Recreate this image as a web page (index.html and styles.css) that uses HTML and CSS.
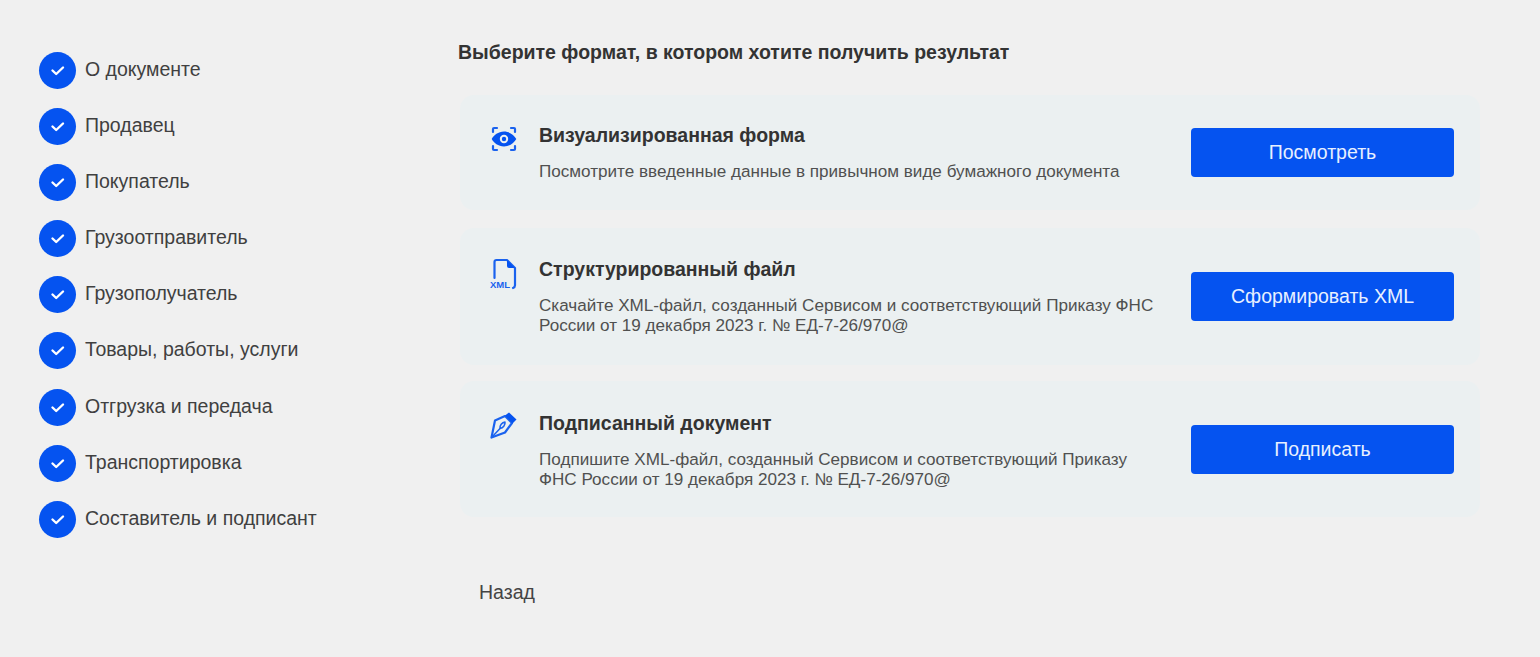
FILE: index.html
```html
<!DOCTYPE html>
<html lang="ru">
<head>
<meta charset="utf-8">
<title>Выбор формата</title>
<link rel="stylesheet" href="styles.css">
</head>
<body>
<div class="page">
  <nav class="steps">
    <div class="step"><span class="dot"><svg viewBox="0 0 37 37"><path d="M13.500 18.500l3.700 3.500 6.800-6.500"/></svg></span><span class="label">О документе</span></div>
    <div class="step"><span class="dot"><svg viewBox="0 0 37 37"><path d="M13.500 18.500l3.700 3.500 6.800-6.500"/></svg></span><span class="label">Продавец</span></div>
    <div class="step"><span class="dot"><svg viewBox="0 0 37 37"><path d="M13.500 18.500l3.700 3.500 6.800-6.500"/></svg></span><span class="label">Покупатель</span></div>
    <div class="step"><span class="dot"><svg viewBox="0 0 37 37"><path d="M13.500 18.500l3.700 3.500 6.800-6.500"/></svg></span><span class="label">Грузоотправитель</span></div>
    <div class="step"><span class="dot"><svg viewBox="0 0 37 37"><path d="M13.500 18.500l3.700 3.500 6.800-6.500"/></svg></span><span class="label">Грузополучатель</span></div>
    <div class="step"><span class="dot"><svg viewBox="0 0 37 37"><path d="M13.500 18.500l3.700 3.500 6.800-6.500"/></svg></span><span class="label">Товары, работы, услуги</span></div>
    <div class="step"><span class="dot"><svg viewBox="0 0 37 37"><path d="M13.500 18.500l3.700 3.500 6.800-6.500"/></svg></span><span class="label">Отгрузка и передача</span></div>
    <div class="step"><span class="dot"><svg viewBox="0 0 37 37"><path d="M13.500 18.500l3.700 3.500 6.800-6.500"/></svg></span><span class="label">Транспортировка</span></div>
    <div class="step"><span class="dot"><svg viewBox="0 0 37 37"><path d="M13.500 18.500l3.700 3.500 6.800-6.500"/></svg></span><span class="label">Составитель и подписант</span></div>
  </nav>
  <main class="content">
    <h1 class="title">Выберите формат, в котором хотите получить результат</h1>
    <section class="card card-view">
      <svg class="icon" viewBox="0 0 28 28">
        <path class="line" d="M3 7V4a1 1 0 0 1 1-1h3M21 3h3a1 1 0 0 1 1 1v3M25 21v3a1 1 0 0 1-1 1h-3M7 25H4a1 1 0 0 1-1-1v-3"/>
        <path class="fill" fill-rule="evenodd" d="M14 6.500c5.800 0 10.200 3.800 12.300 7.500-2.100 3.700-6.500 7.500-12.300 7.500S3.800 17.700 1.700 14C3.800 10.300 8.200 6.500 14 6.500zm0 3.300a4.200 4.200 0 1 0 0 8.400 4.200 4.200 0 0 0 0-8.400z"/>
        <circle class="fill" cx="14" cy="14" r="2.200"/>
      </svg>
      <div class="text">
        <h2>Визуализированная форма</h2>
        <p>Посмотрите введенные данные в привычном виде бумажного документа</p>
      </div>
      <button class="btn">Посмотреть</button>
    </section>
    <section class="card card-xml">
      <svg class="icon" viewBox="0 0 28 32">
        <path class="line" d="M4.500 20V4a2 2 0 0 1 2-2h10.500l8 8v17a3 3 0 0 1-2 3"/>
        <path class="fill" d="M17 2l8 8h-6a2 2 0 0 1-2-2z"/>
        <text class="xml" x="0" y="30">XML</text>
      </svg>
      <div class="text">
        <h2>Структурированный файл</h2>
        <p>Скачайте XML-файл, созданный Сервисом и соответствующий Приказу ФНС России от 19 декабря 2023 г. № ЕД-7-26/970@</p>
      </div>
      <button class="btn">Сформировать XML</button>
    </section>
    <section class="card card-sign">
      <svg class="icon" viewBox="0 0 28 28">
        <path class="line" d="M1.500 26.500L5 9.500 15 5l7 7-7 9.500z"/>
        <path class="line thin" d="M2 26l8-8.500"/>
        <path class="line thin" d="M10 17.500c-.5-3 2-6 5-6.500.5 3-2 6-5 6.500z"/>
        <path class="fill" d="M15 4.500l4-3 7.500 7-4 4z"/>
      </svg>
      <div class="text">
        <h2>Подписанный документ</h2>
        <p>Подпишите XML-файл, созданный Сервисом и соответствующий Приказу ФНС России от 19 декабря 2023 г. № ЕД-7-26/970@</p>
      </div>
      <button class="btn">Подписать</button>
    </section>
    <a class="back">Назад</a>
  </main>
</div>
</body>
</html>
```
FILE: styles.css
```css
* { box-sizing: border-box; }
html, body { margin: 0; height: 100%; }
body { background: #f0f0f0; color: #333; font-family: "Liberation Sans", Arial, sans-serif; overflow: hidden; }
.page { display: flex; height: 657px; padding: 0 60px 0 39px; }
.steps { width: 419px; padding-top: 51.500px; display: flex; flex-direction: column; gap: 19.200px; flex: none; }
.step { display: flex; align-items: center; gap: 9px; height: 37px; font-size: 19.500px; line-height: 37px; color: #404040; }
.label { padding-bottom: 2px; }
.dot { width: 37px; height: 37px; border-radius: 50%; background: #0553f0; flex: none; }
.dot svg { display: block; width: 37px; height: 37px; fill: none; stroke: #fff; stroke-width: 2.400; stroke-linecap: round; stroke-linejoin: round; }
.content { flex: 1; padding: 40px 0 0 0; min-width: 0; }
.title { margin: 0 0 31px; font-size: 19.500px; line-height: 24px; font-weight: 700; color: #333; }
.card { margin-left: 2px; display: flex; align-items: center; background: #ebf0f1; border-radius: 14px; padding: 0 26px 0 30px; }
.card-view { height: 115px; margin-bottom: 18px; }
.card-xml { height: 137px; margin-bottom: 16px; }
.card-sign { height: 136px; }
.card-sign .text { padding-top: 2px; }
.icon { width: 28px; height: 28px; flex: none; margin-right: 21px; fill: none; align-self: flex-start; margin-top: 30px; }
.card-xml .icon { height: 32px; }
.line { fill: none; stroke: #1a62ee; stroke-width: 2.200; stroke-linejoin: round; stroke-linecap: round; }
.thin { stroke-width: 1.500; }
.fill { fill: #0553f0; }
.xml { font-size: 9.500px; font-weight: 700; fill: #1a62ee; }
.text { flex: 1; min-width: 0; padding-right: 30px; }
h2 { margin: 0 0 15px; font-size: 19.500px; line-height: 24px; font-weight: 700; color: #333; }
p { margin: 0; font-size: 17.100px; line-height: 20px; color: #505050; }
.btn { flex: none; width: 263px; height: 49px; border: 0; border-radius: 4px; background: #0553f0; color: #e8f0ff; font: 400 19.500px "Liberation Sans", Arial, sans-serif; }
.back { display: block; margin: 63px 0 0 21px; font-size: 19.500px; line-height: 24px; color: #444; }
```
